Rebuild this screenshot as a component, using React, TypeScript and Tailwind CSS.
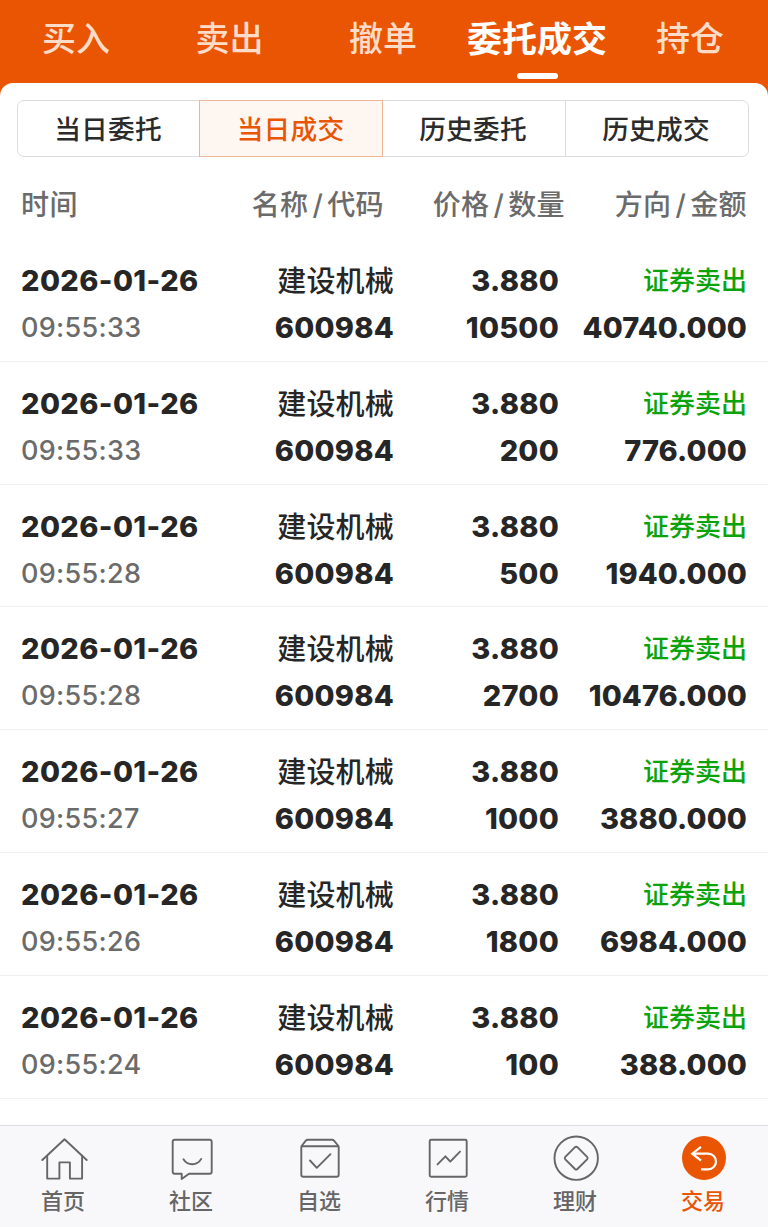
import type { ReactNode } from "react";

const topTabs = [
  { name: "买入", box: "w-[152px]" },
  { name: "卖出", box: "w-[155px]" },
  { name: "撤单", box: "w-[152px]" },
  { name: "委托成交", box: "w-[156px]", active: true },
  { name: "持仓", box: "w-[150px]" },
];

const subTabs = [
  { name: "当日委托", box: "w-[181px] pr-px" },
  { name: "当日成交", box: "-my-px w-[184px] border border-[#eeb596] bg-[#fdf6f1] pr-px text-[#ea5504]" },
  { name: "历史委托", box: "w-[182px] pr-[2px]" },
  { name: "历史成交", box: "flex-1 border-l border-[#dcdcdc] pr-[2px]" },
];

const deals = [
  { time: "09:55:33", count: "10500", amount: "40740.000" },
  { time: "09:55:33", count: "200", amount: "776.000" },
  { time: "09:55:28", count: "500", amount: "1940.000" },
  { time: "09:55:28", count: "2700", amount: "10476.000" },
  { time: "09:55:27", count: "1000", amount: "3880.000" },
  { time: "09:55:26", count: "1800", amount: "6984.000" },
  { time: "09:55:24", count: "100", amount: "388.000" },
];

const Icon = ({ children }: { children: ReactNode }) => (
  <svg
    width="48"
    height="48"
    viewBox="0 0 48 48"
    fill="none"
    stroke="#666666"
    strokeWidth="1.9"
    strokeLinecap="round"
    strokeLinejoin="round"
  >
    {children}
  </svg>
);

const HomeIcon = () => (
  <Icon>
    <path d="M2.300 26 24.500 5.200 46.700 26" />
    <path d="M7.200 21.800v22.800h12.200V28.400h10.500v16.200h12.200V21.800" />
  </Icon>
);

const ChatIcon = () => (
  <Icon>
    <path d="M6.700 5.700h35a2 2 0 0 1 2 2v30a2 2 0 0 1-2 2H21l-7.300 5.200v-5.200h-7a2 2 0 0 1-2-2v-30a2 2 0 0 1 2-2Z" />
    <path d="M15.500 25.200c3.900 6.700 13.800 6.700 17.700-.3" />
  </Icon>
);

const PickIcon = () => (
  <Icon>
    <path d="M11.700 5.700h24.400q1.200 0 1.900 1l4 4.800q.7.800.7 1.800v27.400q0 2-2 2H7.300q-2 0-2-2V13.300q0-1 .7-1.800l3.800-4.800q.7-1 1.900-1Z" />
    <path d="M6 12.300h36" />
    <path d="m14 26.500 6.800 7.300L34.500 20.200" />
  </Icon>
);

const TrendIcon = () => (
  <Icon>
    <rect x="5.700" y="5.700" width="37" height="37" rx="1.500" />
    <path d="m13.500 30.300 7.900-8 4.900 5.300 9.700-10" />
  </Icon>
);

const MoneyIcon = () => (
  <Icon>
    <circle cx="24.200" cy="24.200" r="21.700" />
    <path d="M23 13.200q1.200-1.100 2.400 0l9.700 9.700q1.100 1.200 0 2.400l-9.700 9.700q-1.200 1.100-2.400 0l-9.700-9.700q-1.100-1.200 0-2.400z" />
  </Icon>
);

const TradeIcon = () => (
  <Icon>
    <circle cx="24" cy="24" r="22" fill="#ea5504" stroke="none" />
    <g stroke="#fff" strokeWidth="2.200" strokeLinecap="butt" strokeLinejoin="miter">
      <path d="m21 12.800-8.700 6.900 8.700 6.900" />
      <path d="M12.500 19.700H28.200a7.800 7.800 0 0 1 0 15.600H21" />
    </g>
  </Icon>
);

const navItems = [
  { name: "首页", icon: <HomeIcon /> },
  { name: "社区", icon: <ChatIcon /> },
  { name: "自选", icon: <PickIcon /> },
  { name: "行情", icon: <TrendIcon /> },
  { name: "理财", icon: <MoneyIcon /> },
  { name: "交易", icon: <TradeIcon />, active: true },
];

const Slash = () => <span className="mx-[4px]">/</span>;

const DealRow = ({ deal }: { deal: (typeof deals)[number] }) => (
  <div className="flex h-[122.830px] border-b border-[#f0f0f0] pt-[18px] pr-[21px] pl-[21px] text-[29px] leading-[47px] font-extrabold tracking-[0.25px] text-[#262626]">
    <div className="w-[200px]">
      <div className="tracking-[0.4px]">2026-01-26</div>
      <div className="text-[27px] font-medium tracking-[0.3px] text-[#6b6b6b]">{deal.time}</div>
    </div>
    <div className="w-[173px] text-right">
      <div className="relative top-px font-medium tracking-[0.2px]">建设机械</div>
      <div>600984</div>
    </div>
    <div className="w-[165px] text-right">
      <div>3.880</div>
      <div>{deal.count}</div>
    </div>
    <div className="flex-1 text-right">
      <div className="text-[26px] font-medium tracking-normal text-[#0ba30b]">证券卖出</div>
      <div className="tracking-[0.1px]">{deal.amount}</div>
    </div>
  </div>
);

export default function App() {
  return (
    <div className="flex h-[1227px] w-[768px] flex-col overflow-hidden bg-[#ea5504] font-[Inter,'Noto_Sans_CJK_SC',sans-serif]">
      <div className="flex h-[83px] shrink-0 text-[34px] leading-[78px] font-medium text-[#fddcc8]">
        {topTabs.map((tab) => (
          <div key={tab.name} className={`flex flex-col items-center whitespace-nowrap ${tab.box}`}>
            {tab.active ? (
              <>
                <span className="h-[73px] text-[35px] font-bold text-white">{tab.name}</span>
                <span className="h-[6px] w-[41px] rounded-full bg-white" />
              </>
            ) : (
              <span>{tab.name}</span>
            )}
          </div>
        ))}
      </div>

      <div className="flex min-h-0 flex-1 flex-col rounded-t-[13px] bg-white pt-[17px]">
        <div className="mr-[19px] ml-[17px] flex h-[57px] shrink-0 rounded-[7px] border border-[#dcdcdc] text-center text-[26.700px] leading-[56px] font-medium tracking-[0.2px] text-[#2b2b2b]">
          {subTabs.map((tab) => (
            <div key={tab.name} className={tab.box}>
              {tab.name}
            </div>
          ))}
        </div>

        <div className="flex h-[82px] shrink-0 px-[21px] text-[28px] leading-[96px] font-medium tracking-[0.4px] text-[#6b6b6b]">
          <div className="w-[190px]">时间</div>
          <div className="w-[173px] text-right">名称<Slash />代码</div>
          <div className="w-[181px] text-right">价格<Slash />数量</div>
          <div className="flex-1 text-right">方向<Slash />金额</div>
        </div>

        <div className="min-h-0 flex-1 overflow-hidden">
          {deals.map((deal, i) => (
            <DealRow key={i} deal={deal} />
          ))}
        </div>

        <div className="flex h-[102px] shrink-0 border-t border-[#dedee0] bg-[#f8f8fb] pt-2">
          {navItems.map((item) => (
            <div
              key={item.name}
              className={`flex flex-1 flex-col items-center text-[22px] leading-[39px] font-medium ${item.active ? "text-[#ea5504]" : "text-[#666666]"}`}
            >
              {item.icon}
              <span className="pr-[2px]">{item.name}</span>
            </div>
          ))}
        </div>
      </div>
    </div>
  );
}
